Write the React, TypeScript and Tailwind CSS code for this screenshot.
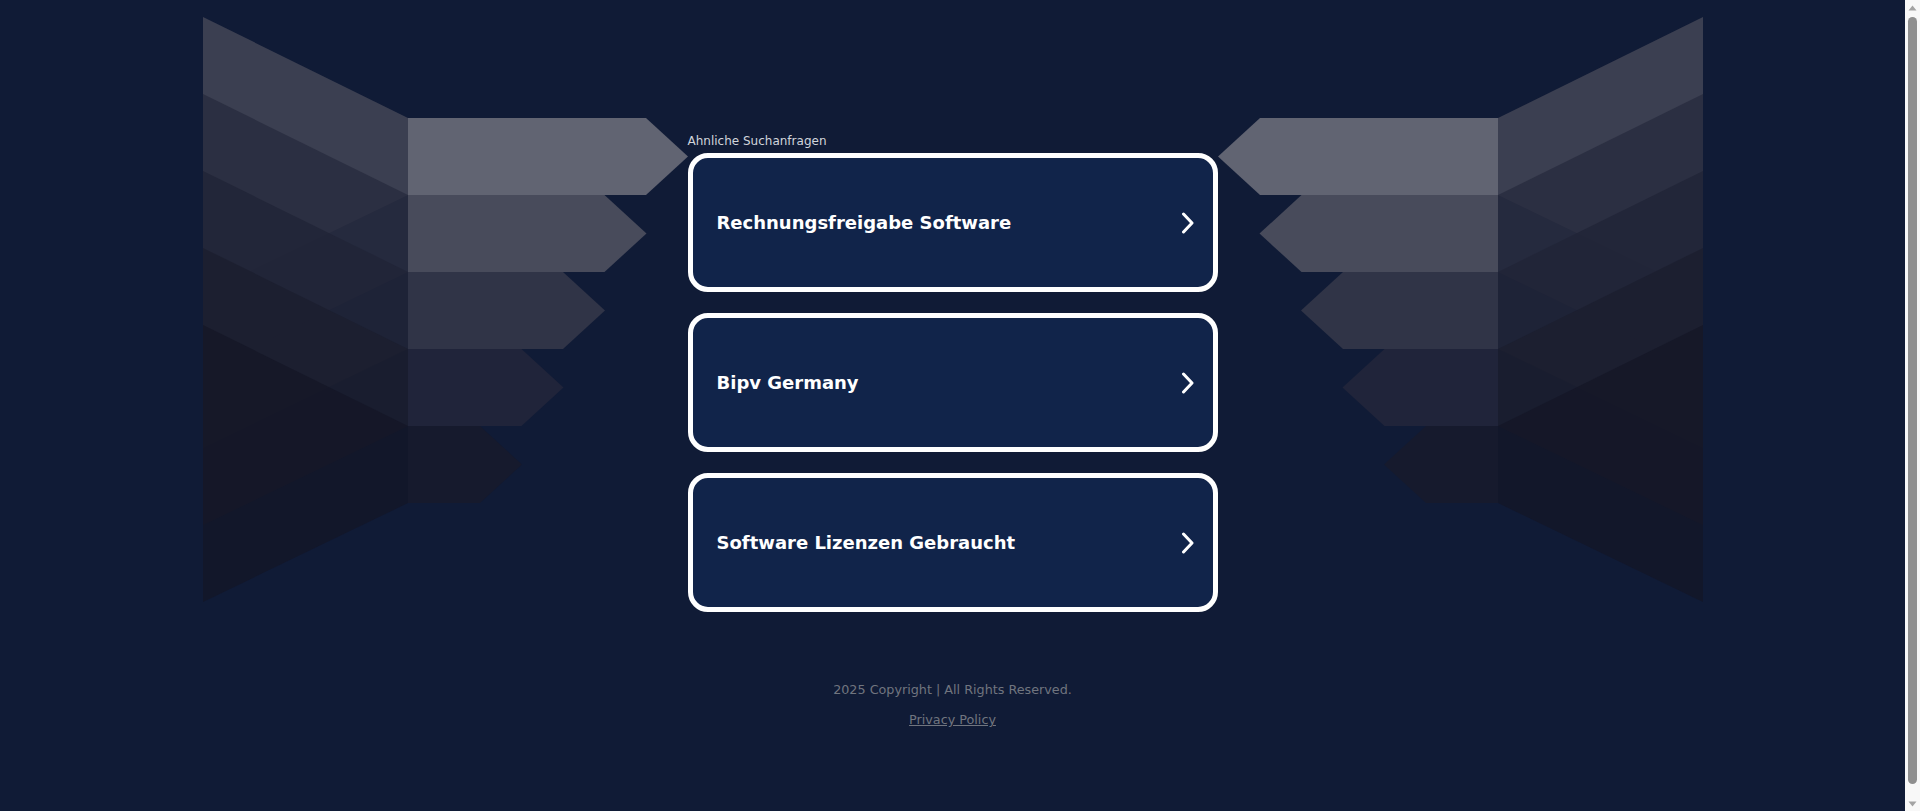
import React from 'react'

const rectFills = ['#616472', '#484b5b', '#303447', '#20243a', '#161a2d']
const fanFills = ['#434556', '#292d3f', '#212537', '#1b1e2e', '#141525']
const fanOpacity = [0.85, 0.85, 0.85, 0.8, 0.7]

const searches = ['Rechnungsfreigabe Software', 'Bipv Germany', 'Software Lizenzen Gebraucht']

// one side of the folded arrow graphic; the right side is the same drawing mirrored
function Wing({ flip }: { flip?: boolean }) {
  const mid = 205
  return (
    <svg
      width="485"
      height="586"
      viewBox="0 0 485 586"
      className={flip ? 'shrink-0 -scale-x-100' : 'shrink-0'}
    >
      {fanFills.map((fill, k) => {
        const top = 101 + 77 * k
        const bottom = 178 + 77 * k
        return (
          <polygon
            key={'fan' + k}
            points={`${mid},${top} 0,${77 * k} 0,${277 + 77 * k} ${mid},${bottom}`}
            fill={fill}
            fillOpacity={fanOpacity[k]}
          />
        )
      })}
      {rectFills.map((fill, k) => {
        const top = 101 + 77 * k
        const bottom = 178 + 77 * k
        const end = 443 - 41.5 * k
        return (
          <polygon
            key={'arrow' + k}
            points={`${mid},${top} ${end},${top} ${end + 42},${(top + bottom) / 2} ${end},${bottom} ${mid},${bottom}`}
            fill={fill}
          />
        )
      })}
    </svg>
  )
}

function SearchCard({ label }: { label: string }) {
  return (
    <a
      href="#"
      className="flex h-[139px] items-center justify-between rounded-[20px] border-[5px] border-white bg-[#11244a] pl-[24px] pr-[18px] text-white"
    >
      <span className="text-[18px] font-bold">{label}</span>
      <svg width="14" height="22" viewBox="0 0 14 22" fill="none">
        <polyline points="2.5,2 11,11 2.5,20" stroke="white" strokeWidth="3" strokeLinecap="round" strokeLinejoin="round" />
      </svg>
    </a>
  )
}

// the browser's classic scrollbar as seen in the capture
function Scrollbar() {
  return (
    <div className="flex w-[15px] shrink-0 flex-col bg-[#f8f8f8]">
      <div className="flex h-[15px] items-center justify-center">
        <svg width="9" height="6" viewBox="0 0 9 6">
          <polygon points="4.5,0.5 8.5,5.5 0.5,5.5" fill="#a3a3a3" />
        </svg>
      </div>
      <div className="flex flex-1 flex-col pb-[12px] pt-[2px]">
        <div className="mx-auto w-[9px] flex-1 rounded-full bg-[#8f8f8f]" />
      </div>
      <div className="flex h-[15px] items-center justify-center">
        <svg width="9" height="6" viewBox="0 0 9 6">
          <polygon points="0.5,0.5 8.5,0.5 4.5,5.5" fill="#a3a3a3" />
        </svg>
      </div>
    </div>
  )
}

export default function App() {
  return (
    <div className="flex h-[811px] overflow-hidden bg-[#101b36] font-['DejaVu_Sans',sans-serif]">
      <main className="min-w-0 flex-1">
        <div className="flex justify-center pt-[17px]">
          <Wing />
          <div className="flex w-[530px] shrink-0 flex-col pt-[116px]">
            <p className="h-[20px] text-[12px] leading-[16px] text-[#d1d5db]">Ahnliche Suchanfragen</p>
            <div className="flex flex-col gap-[21px]">
              {searches.map((s) => (
                <SearchCard key={s} label={s} />
              ))}
            </div>
          </div>
          <Wing flip />
        </div>

        <footer className="mt-[68px] flex flex-col items-center gap-[10px] text-[12.75px] leading-[20px] text-[#70757f]">
          <p>2025 Copyright | All Rights Reserved.</p>
          <a href="#" className="underline">
            Privacy Policy
          </a>
        </footer>
      </main>
      <Scrollbar />
    </div>
  )
}
